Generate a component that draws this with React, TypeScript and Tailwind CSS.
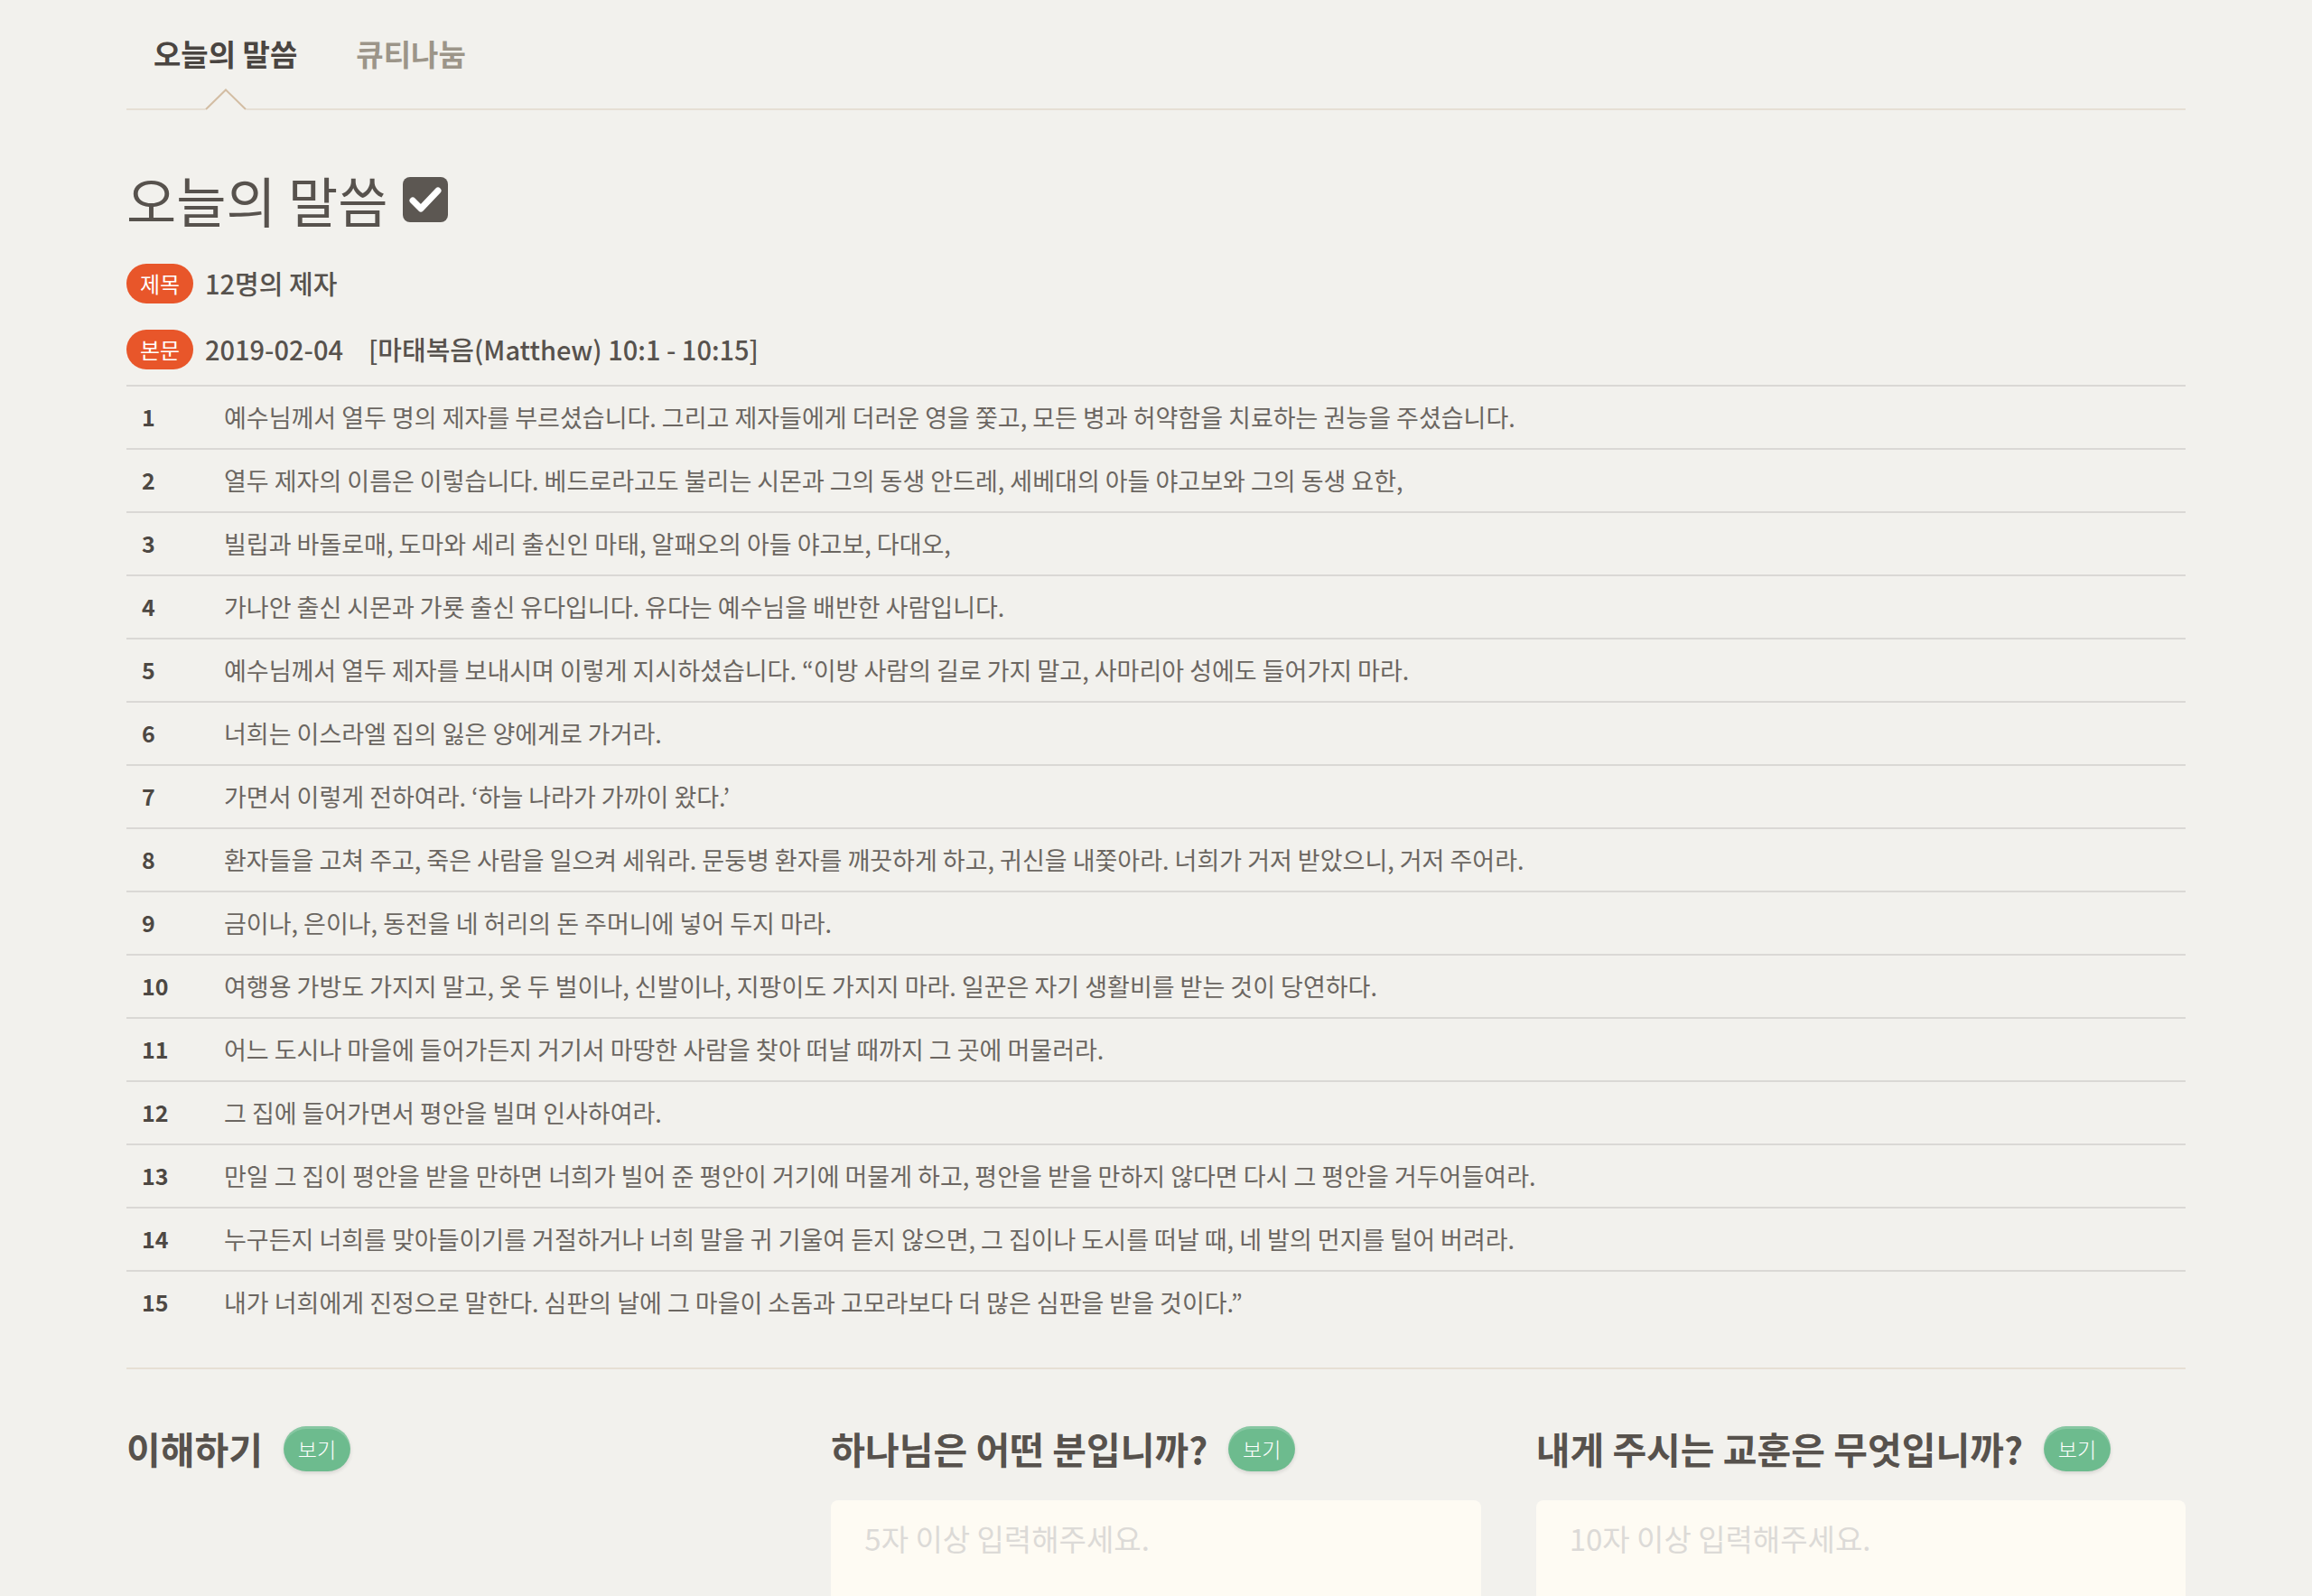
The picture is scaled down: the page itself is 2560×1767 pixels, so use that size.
import React from 'react'

const VERSES: string[] = [
  '예수님께서 열두 명의 제자를 부르셨습니다. 그리고 제자들에게 더러운 영을 쫓고, 모든 병과 허약함을 치료하는 권능을 주셨습니다.',
  '열두 제자의 이름은 이렇습니다. 베드로라고도 불리는 시몬과 그의 동생 안드레, 세베대의 아들 야고보와 그의 동생 요한,',
  '빌립과 바돌로매, 도마와 세리 출신인 마태, 알패오의 아들 야고보, 다대오,',
  '가나안 출신 시몬과 가룟 출신 유다입니다. 유다는 예수님을 배반한 사람입니다.',
  '예수님께서 열두 제자를 보내시며 이렇게 지시하셨습니다. “이방 사람의 길로 가지 말고, 사마리아 성에도 들어가지 마라.',
  '너희는 이스라엘 집의 잃은 양에게로 가거라.',
  '가면서 이렇게 전하여라. ‘하늘 나라가 가까이 왔다.’',
  '환자들을 고쳐 주고, 죽은 사람을 일으켜 세워라. 문둥병 환자를 깨끗하게 하고, 귀신을 내쫓아라. 너희가 거저 받았으니, 거저 주어라.',
  '금이나, 은이나, 동전을 네 허리의 돈 주머니에 넣어 두지 마라.',
  '여행용 가방도 가지지 말고, 옷 두 벌이나, 신발이나, 지팡이도 가지지 마라. 일꾼은 자기 생활비를 받는 것이 당연하다.',
  '어느 도시나 마을에 들어가든지 거기서 마땅한 사람을 찾아 떠날 때까지 그 곳에 머물러라.',
  '그 집에 들어가면서 평안을 빌며 인사하여라.',
  '만일 그 집이 평안을 받을 만하면 너희가 빌어 준 평안이 거기에 머물게 하고, 평안을 받을 만하지 않다면 다시 그 평안을 거두어들여라.',
  '누구든지 너희를 맞아들이기를 거절하거나 너희 말을 귀 기울여 듣지 않으면, 그 집이나 도시를 떠날 때, 네 발의 먼지를 털어 버려라.',
  '내가 너희에게 진정으로 말한다. 심판의 날에 그 마을이 소돔과 고모라보다 더 많은 심판을 받을 것이다.”',
]

const QUESTIONS = [
  { title: '이해하기', placeholder: null },
  { title: '하나님은 어떤 분입니까?', placeholder: '5자 이상 입력해주세요.' },
  { title: '내게 주시는 교훈은 무엇입니까?', placeholder: '10자 이상 입력해주세요.' },
]

function CheckSquare() {
  return (
    <svg width="50" height="50" viewBox="0 0 50 50">
      <rect x="0" y="0" width="50" height="50" rx="8" fill="#5c5752" />
      <path d="M11 26 L20 35 L39 15" fill="none" stroke="#fff" strokeWidth="7" strokeLinecap="round" strokeLinejoin="round" />
    </svg>
  )
}

function Badge({ children }: { children: React.ReactNode }) {
  return (
    <span className="flex h-[44px] w-[74px] shrink-0 items-center justify-center rounded-full bg-[#e8562a] text-[24px] text-white">
      {children}
    </span>
  )
}

function ViewButton() {
  return (
    <button className="flex h-[50px] w-[74px] shrink-0 items-center justify-center rounded-full bg-[#6dbb8e] text-[23px] font-light text-white shadow-[inset_0_3px_0_rgba(255,255,255,0.18),0_2px_4px_rgba(0,0,0,0.12)]">
      보기
    </button>
  )
}

export default function App() {
  return (
    <div className="min-h-screen overflow-hidden bg-[#f2f1ed] font-['Noto_Sans_CJK_KR',sans-serif] text-[#57524d]">
      <div className="mx-auto w-[2280px]">
        {/* 탭 */}
        <nav className="flex gap-[65px] border-b-2 border-[#e6dfd4] pl-[30px] pt-[37px] pb-[38px]">
          <div className="relative text-[33px] font-bold leading-[45px] text-[#4a4541]">
            오늘의 말씀
            <svg
              className="absolute bottom-[-40px] left-1/2 -translate-x-1/2"
              width="46"
              height="24"
              viewBox="0 0 46 24"
            >
              <polygon points="0,24 23,1 46,24" fill="#f2f1ed" />
              <polyline points="1,23 23,1.5 45,23" fill="none" stroke="#d3bda3" strokeWidth="2" />
            </svg>
          </div>
          <div className="text-[33px] font-bold leading-[45px] text-[#9c9589]">큐티나눔</div>
        </nav>

        {/* 제목 */}
        <div className="mt-[68px] flex h-[62px] items-center gap-[17px]">
          <h1 className="text-[60px] font-normal leading-none text-[#57524d]">오늘의 말씀</h1>
          <CheckSquare />
        </div>

        <div className="mt-[40px] flex h-[44px] items-center gap-[13px]">
          <Badge>제목</Badge>
          <span className="text-[29px] font-medium">12명의 제자</span>
        </div>
        <div className="mt-[29px] flex h-[44px] items-center gap-[13px]">
          <Badge>본문</Badge>
          <span className="text-[29px] font-medium">
            2019-02-04<span className="ml-[28px]">[마태복음(Matthew) 10:1 - 10:15]</span>
          </span>
        </div>

        {/* 본문 구절 */}
        <ul className="mt-[17px]">
          {VERSES.map((v, i) => (
            <li key={i} className="flex h-[70px] items-center border-t-2 border-[#dad8d5]">
              <span className="w-[108px] shrink-0 pl-[17px] text-[25px] font-bold text-[#4d4843]">{i + 1}</span>
              <span className="text-[27px] text-[#6b6661]">{v}</span>
            </li>
          ))}
        </ul>

        <div className="mt-[38px] h-[2px] bg-[#e6dfd4]" />

        {/* 질문 */}
        <div className="mt-[62px] grid grid-cols-3 gap-[61px]">
          {QUESTIONS.map((q) => (
            <div key={q.title}>
              <div className="flex h-[52px] items-center gap-[23px]">
                <h3 className="text-[41px] font-bold text-[#57524d]">{q.title}</h3>
                <ViewButton />
              </div>
              {q.placeholder && (
                <textarea
                  className="mt-[31px] block h-[200px] w-full resize-none rounded-lg bg-[#fefbf3] px-[37px] pt-[18px] text-[33px] outline-none placeholder:text-[#dcdad7]"
                  placeholder={q.placeholder}
                />
              )}
            </div>
          ))}
        </div>
      </div>
    </div>
  )
}
